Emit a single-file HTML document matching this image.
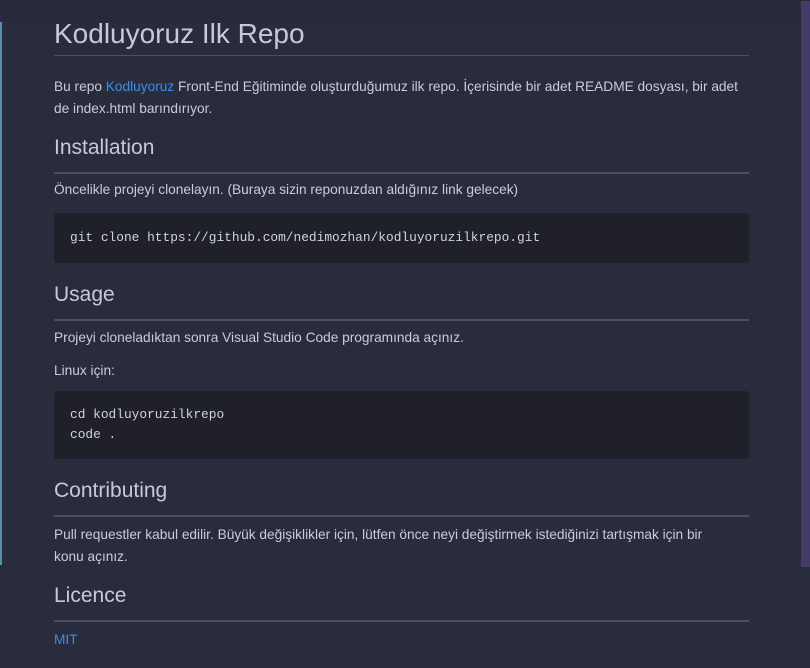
<!DOCTYPE html>
<html><head><meta charset="utf-8"><style>
html,body{margin:0;width:810px;height:668px;overflow:hidden;background:#292c3d;font-family:"Liberation Sans",sans-serif;color:#c9ccd8}
.a{position:absolute;left:54px;white-space:nowrap}
.h1{font-size:28px;line-height:34px;color:#c6cad8}
.h2{font-size:21px;line-height:26px;color:#c6cad8}
.p{font-size:13.7px;line-height:22px}
.hr{position:absolute;left:54px;width:695px;height:2px;background:#4c4f63}
.code{position:absolute;left:54px;width:695px;background:#1f2029;border-radius:3px}
.m{position:absolute;left:16px;font-family:"Liberation Mono",monospace;font-size:12.85px;line-height:20px;color:#d0d3dc;white-space:pre}
a{color:#3b8eea;text-decoration:none}
</style></head><body>
<div style="position:absolute;left:0;top:0;width:810px;height:22px;background:#272a3a"></div>
<div style="position:absolute;left:0;top:22px;width:2px;height:543px;background:#5b8fb0"></div>
<div style="position:absolute;left:801px;top:1px;width:9px;height:566px;background:#443c66"></div>

<div class="a h1" style="top:17px">Kodluyoruz Ilk Repo</div>
<div class="hr" style="top:55px;height:1px"></div>
<div class="a p" style="top:76px">Bu repo <a>Kodluyoruz</a> Front-End Eğitiminde oluşturduğumuz ilk repo. İçerisinde bir adet README dosyası, bir adet</div>
<div class="a p" style="top:98px">de index.html barındırıyor.</div>

<div class="a h2" style="top:135px">Installation</div>
<div class="hr" style="top:172px"></div>
<div class="a p" style="top:179px">Öncelikle projeyi clonelayın. (Buraya sizin reponuzdan aldığınız link gelecek)</div>
<div class="code" style="top:213px;height:50px"><div class="m" style="top:15px">git clone https://github.com/nedimozhan/kodluyoruzilkrepo.git</div></div>

<div class="a h2" style="top:282px">Usage</div>
<div class="hr" style="top:319px"></div>
<div class="a p" style="top:327px">Projeyi cloneladıktan sonra Visual Studio Code programında açınız.</div>
<div class="a p" style="top:360px">Linux için:</div>
<div class="code" style="top:391px;height:68px"><div class="m" style="top:14px">cd kodluyoruzilkrepo
code .</div></div>

<div class="a h2" style="top:478px">Contributing</div>
<div class="hr" style="top:515px"></div>
<div class="a p" style="top:524px">Pull requestler kabul edilir. Büyük değişiklikler için, lütfen önce neyi değiştirmek istediğinizi tartışmak için bir</div>
<div class="a p" style="top:546px">konu açınız.</div>

<div class="a h2" style="top:583px">Licence</div>
<div class="hr" style="top:620px"></div>
<div class="a p" style="top:629px"><a>MIT</a></div>
</body></html>
